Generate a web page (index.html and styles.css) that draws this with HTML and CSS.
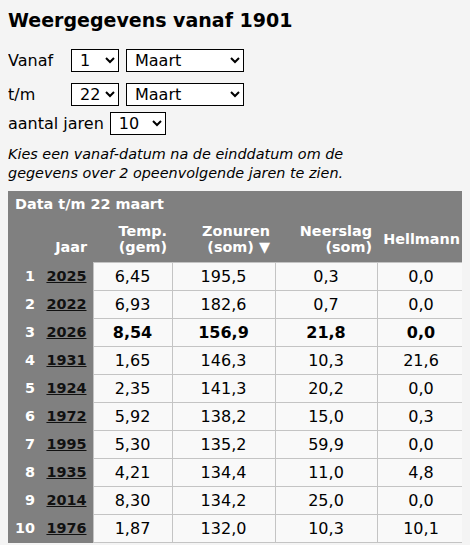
FILE: index.html
```html
<!DOCTYPE html>
<html lang="nl">
<head>
<meta charset="utf-8">
<title>Weergegevens vanaf 1901</title>
<link rel="stylesheet" href="styles.css">
</head>
<body>
<h1 class="title">Weergegevens vanaf 1901</h1>
<form class="filters">
  <div class="frow">
    <span class="flabel">Vanaf</span>
    <select class="sel sel-day"><option>1</option><option>2</option><option>3</option></select>
    <select class="sel sel-month"><option>Januari</option><option>Februari</option><option selected>Maart</option><option>April</option></select>
  </div>
  <div class="frow">
    <span class="flabel">t/m</span>
    <select class="sel sel-day"><option>21</option><option selected>22</option><option>23</option></select>
    <select class="sel sel-month"><option>Februari</option><option selected>Maart</option><option>April</option></select>
  </div>
  <div class="frow frow-years">
    <span class="ylabel">aantal jaren</span>
    <select class="sel sel-years"><option>5</option><option selected>10</option><option>20</option></select>
  </div>
  <p class="note">Kies een vanaf-datum na de einddatum om de gegevens over 2 opeenvolgende jaren te zien.</p>
</form>
<table class="data">
  <colgroup>
    <col class="c-idx"><col class="c-year"><col class="c-temp"><col class="c-zon"><col class="c-neer"><col class="c-hell">
  </colgroup>
  <thead>
    <tr class="cap"><th colspan="6">Data t/m 22 maart</th></tr>
    <tr class="head">
      <th></th>
      <th class="h-jaar">Jaar</th>
      <th>Temp.<br>(gem)</th>
      <th>Zonuren<br>(som) ▼</th>
      <th>Neerslag<br>(som)</th>
      <th>Hellmann</th>
    </tr>
  </thead>
  <tbody>
    <tr><th class="idx">1</th><th class="yr"><a href="#">2025</a></th><td>6,45</td><td>195,5</td><td>0,3</td><td>0,0</td></tr>
    <tr><th class="idx">2</th><th class="yr"><a href="#">2022</a></th><td>6,93</td><td>182,6</td><td>0,7</td><td>0,0</td></tr>
    <tr class="cur"><th class="idx">3</th><th class="yr"><a href="#">2026</a></th><td>8,54</td><td>156,9</td><td>21,8</td><td>0,0</td></tr>
    <tr><th class="idx">4</th><th class="yr"><a href="#">1931</a></th><td>1,65</td><td>146,3</td><td>10,3</td><td>21,6</td></tr>
    <tr><th class="idx">5</th><th class="yr"><a href="#">1924</a></th><td>2,35</td><td>141,3</td><td>20,2</td><td>0,0</td></tr>
    <tr><th class="idx">6</th><th class="yr"><a href="#">1972</a></th><td>5,92</td><td>138,2</td><td>15,0</td><td>0,3</td></tr>
    <tr><th class="idx">7</th><th class="yr"><a href="#">1995</a></th><td>5,30</td><td>135,2</td><td>59,9</td><td>0,0</td></tr>
    <tr><th class="idx">8</th><th class="yr"><a href="#">1935</a></th><td>4,21</td><td>134,4</td><td>11,0</td><td>4,8</td></tr>
    <tr><th class="idx">9</th><th class="yr"><a href="#">2014</a></th><td>8,30</td><td>134,2</td><td>25,0</td><td>0,0</td></tr>
    <tr><th class="idx">10</th><th class="yr"><a href="#">1976</a></th><td>1,87</td><td>132,0</td><td>10,3</td><td>10,1</td></tr>
  </tbody>
</table>
</body>
</html>
```
FILE: styles.css
```css
html { background: #f4f4f4; }
body {
  margin: 8px;
  font-family: "DejaVu Sans", Verdana, sans-serif;
  font-size: 16px;
  color: #000;
  background: #f4f4f4;
}
.title {
  font-size: 19px;
  font-weight: bold;
  line-height: 22px;
  margin: 1px 0 18px;
}
.filters { margin: 0; }
.frow {
  display: flex;
  align-items: center;
  height: 23px;
  margin-bottom: 11px;
}
.frow-years { margin-bottom: 0; }
.frow + .frow-years { margin-top: -5px; }
.flabel { width: 63px; }
.ylabel { margin-right: 6px; }
.sel {
  font-family: "DejaVu Sans", Verdana, sans-serif;
  font-size: 16px;
  height: 23px;
  box-sizing: border-box;
  border: 1px solid #000;
  border-radius: 0;
  background-color: #fff;
  color: #000;
  padding: 0 0 0 4px;
  margin: 0;
}
.sel-day { width: 48px; margin-right: 7px; }
.sel-month { width: 118px; }
.sel-years { width: 56px; }
.note {
  font-style: italic;
  font-size: 14.4px;
  line-height: 19px;
  max-width: 350px;
  margin: 10px 0 8px;
}
.data {
  width: 457px;
  table-layout: fixed;
  border-collapse: collapse;
  background: #808080;
}
.c-idx { width: 32px; }
.c-year { width: 53px; }
.c-temp { width: 79px; }
.c-zon { width: 103px; }
.c-neer { width: 102px; }
.c-hell { width: 88px; }
.data th {
  color: #fff;
  font-size: 14.4px;
  font-weight: bold;
  padding: 0;
}
.cap th {
  text-align: left;
  line-height: 17px;
  padding: 5px 0 4px 7px;
  vertical-align: middle;
}
.head th {
  text-align: right;
  padding: 6px 5px 7px 0;
  vertical-align: middle;
  line-height: 16px;
}
.head th.h-jaar {
  vertical-align: bottom;
  padding: 0 6px 8px 0;
}
.data td {
  background: #f9f9f9;
  border: 1px solid #c4c4c4;
  text-align: center;
  line-height: 19px;
  padding: 4px 0;
  font-size: 16px;
}
.data tbody th {
  text-align: right;
  line-height: 19px;
  padding-top: 4px;
  padding-bottom: 4px;
}
.idx { padding-right: 5px !important; }
.yr { padding-right: 6px !important; }
.yr a { color: #111; text-decoration: underline; }
.cur td { font-weight: bold; }
```
